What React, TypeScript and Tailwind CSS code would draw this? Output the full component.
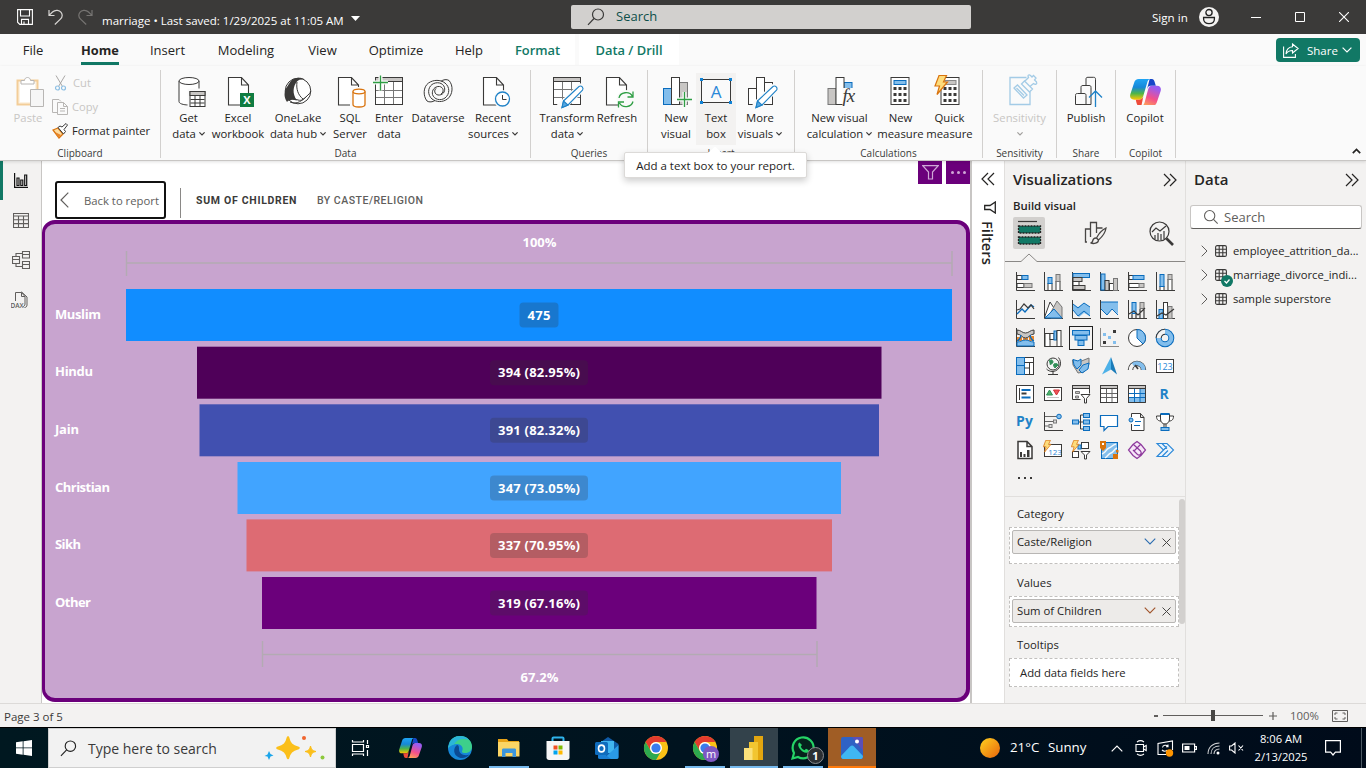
import React, { useId } from "react";

const INK = "#3b3a39";
const BLUE = "#0a6cbd";
const SKY = "#83beec";
const GRAY = "#c8c6c4";

type BoxProps = { x: number; y: number; w: number; h: number; f?: string; s?: string; sw?: number };
const Bx = ({ x, y, w, h, f = "#fff", s = INK, sw = 1 }: BoxProps) => (
  <rect x={x} y={y} width={w} height={h} fill={f} stroke={s} strokeWidth={sw} />
);
const P = ({ d, s = INK, f = "none", w = 1 }: { d: string; s?: string; f?: string; w?: number }) => (
  <path d={d} stroke={s} fill={f} strokeWidth={w} />
);

/* ---------- shared glyphs ---------- */

const Magnifier = ({ className = "", color = "#3b3a39", flip = false }: { className?: string; color?: string; flip?: boolean }) => (
  <svg className={className} viewBox="0 0 18 18" fill="none" stroke={color} strokeWidth="1.2">
    {flip ? (
      <>
        <circle cx="7.5" cy="7.5" r="5.8" />
        <path d="M11.8 11.8 16.5 16.5" />
      </>
    ) : (
      <>
        <circle cx="11" cy="6.5" r="5.5" />
        <path d="M7 10.5 1 16.8" />
      </>
    )}
  </svg>
);

const Chevron = ({ w = 10, color = INK, sw = 1.2 }: { w?: number; color?: string; sw?: number }) => (
  <svg width={w} height={w * 0.6} viewBox="0 0 10 6" fill="none" stroke={color} strokeWidth={sw}>
    <path d="M.6.6 5 5 9.4.6" />
  </svg>
);

const DoubleChevron = ({ left = false }: { left?: boolean }) => (
  <svg width="14" height="14" viewBox="0 0 14 14" fill="none" stroke="#252423" strokeWidth="1.2">
    {left ? <path d="M7 1 1 7l6 6M13 1 7 7l6 6" /> : <path d="M1 1l6 6-6 6M7 1l6 6-6 6" />}
  </svg>
);

const CopilotLogo = ({ size }: { size: number }) => {
  const id = useId().replace(/:/g, "");
  return (
    <svg width={size} height={size * 0.87} viewBox="0 0 30 26">
      <defs>
        <linearGradient id={id + "a"} x1="0" y1="0" x2="0" y2="1">
          <stop offset="0" stopColor="#1fa5f5" />
          <stop offset=".4" stopColor="#1688d8" />
          <stop offset=".7" stopColor="#4fb548" />
          <stop offset="1" stopColor="#ffc700" />
        </linearGradient>
        <linearGradient id={id + "b"} x1="0" y1="1" x2=".4" y2="0">
          <stop offset="0" stopColor="#ffb24a" />
          <stop offset=".5" stopColor="#f4508a" />
          <stop offset="1" stopColor="#9a5cf0" />
        </linearGradient>
      </defs>
      <path d="M19 0h2c2 0 2.700 2 3.300 4.200L25 6.500h-5c-2 0-3 1.500-3.700 4z" fill="#1646c8" />
      <path d="M8.500 0H20c-2 0-2.800 1.400-3.400 3.600L13 16c-1 3-2 4-4 4H4c-3.500 0-4.500-2.400-3.600-5.500L4 3.500C4.800 1.200 6 0 8.500 0z" fill={`url(#${id}a)`} />
      <path d="M11 26H9c-2 0-2.400-1.700-3-4l-.4-2H9c2.500 0 3.400-1.600 4-3.500z" fill="#ee4b3a" />
      <path d="M21.500 26H10.800c2 0 2.900-1.700 3.400-3.600L17.500 10c.8-2.600 1.800-3.600 3.800-3.600H26c3.500 0 4.500 2.400 3.600 5.500L26 22.500c-.8 2.300-2 3.500-4.500 3.500z" fill={`url(#${id}b)`} />
    </svg>
  );
};

/* ---------- title bar ---------- */

const TitleBar = () => (
  <header className="flex h-[34px] shrink-0 items-center bg-[#3b3a39] text-white">
    <div className="flex w-[571px] items-center">
      <svg className="ml-[17px]" width="16" height="16" viewBox="0 0 16 16" fill="none" stroke="#fff" strokeWidth="1.1">
        <path d="M.6.6h14.800v14.800H2.800L.6 13.200zM3.500.6v6.400h9V.6M4.500 15.400v-5h7v5M7 15v-2.500" />
      </svg>
      <svg className="ml-[15px]" width="15" height="16" viewBox="0 0 15 16" fill="none" stroke="#d8d6d4" strokeWidth="1.2">
        <path d="M1 1v5.500h5.500M1.300 6.200 4.500 3c3-2.800 7-1.800 8.600.4 1.700 2.400 1.200 4.800-.7 6.700L6.800 15.500" />
      </svg>
      <svg className="ml-[15px]" width="15" height="16" viewBox="0 0 15 16" fill="none" stroke="#767472" strokeWidth="1.200">
        <path d="M14 1v5.500H8.500M13.700 6.200 10.500 3c-3-2.800-7-1.800-8.600.4-1.700 2.400-1.200 4.800.7 6.700l5.600 5.400" />
      </svg>
      <span className="ml-[9px] mt-[7px] whitespace-nowrap text-[11.500px] leading-4">marriage • Last saved: 1/29/2025 at 11:05 AM</span>
      <svg className="ml-[7px] mt-[2px]" width="9" height="5" viewBox="0 0 9 5">
        <path d="M0 0h9L4.500 5z" fill="#fff" />
      </svg>
    </div>
    <div className="flex h-6 w-[400px] items-center rounded-[2px] bg-[#d2d0ce]">
      <Magnifier className="ml-4 size-[18px]" />
      <span className="ml-[11px] text-[13px] text-[#0d4f4a]">Search</span>
    </div>
    <div className="flex flex-1 items-center">
      <span className="ml-[181px] w-[37px] whitespace-nowrap pt-px text-[11.600px]">Sign in</span>
      <svg className="ml-[10px]" width="20" height="20" viewBox="0 0 20 20">
        <circle cx="10" cy="10" r="10" fill="#f3f2f1" />
        <circle cx="10" cy="5.600" r="3.100" fill="none" stroke="#222" strokeWidth="1.300" />
        <path d="M4.600 10.500h10.800v1.500c0 3-2.400 4.600-5.400 4.600S4.600 15 4.600 12z" fill="none" stroke="#222" strokeWidth="1.300" />
      </svg>
      <svg className="ml-[32px]" width="10" height="10" viewBox="0 0 10 10"><path d="M0 5.500h10" stroke="#fff" /></svg>
      <svg className="ml-[34px]" width="10" height="10" viewBox="0 0 10 10"><path d="M.5.5h9v9h-9z" fill="none" stroke="#fff" /></svg>
      <svg className="ml-[34px]" width="10" height="10" viewBox="0 0 10 10"><path d="m0 0 10 10M10 0 0 10" stroke="#fff" strokeWidth="1.100" /></svg>
    </div>
  </header>
);

/* ---------- ribbon tabs ---------- */

const tabs: [string, string][] = [
  ["File", "w-[66px]"],
  ["Home", "w-[68px]"],
  ["Insert", "w-[67px]"],
  ["Modeling", "w-[90px]"],
  ["View", "w-[63px]"],
  ["Optimize", "w-[84px]"],
  ["Help", "w-[62px]"],
];

const TabStrip = () => (
  <nav className="flex h-8 shrink-0 bg-[#fafafa] text-[13px] text-[#252423]">
    {tabs.map(([name, w]) => (
      <div key={name} className={`flex justify-center ${w}`}>
        <span className={`h-[31px] pt-[7px] leading-[19px] ${name === "Home" ? "border-b-[3px] border-[#117865] text-[12.800px] font-bold" : ""}`}>{name}</span>
      </div>
    ))}
    <div className="h-[31px] w-[75px] bg-white pt-[7px] text-center text-[12.900px] font-semibold leading-[19px] text-[#117865]">Format</div>
    <div className="ml-1 h-[31px] w-[100px] bg-white pt-[7px] text-center text-[12.900px] font-semibold leading-[19px] text-[#117865]">Data / Drill</div>
    <div className="ml-auto mr-[6px] mt-1 flex h-6 w-[84px] items-center rounded-[4px] bg-[#117865] text-[11.500px] text-white">
      <svg className="ml-[7px]" width="16" height="15" viewBox="0 0 16 15" fill="none" stroke="#fff" strokeWidth="1.100">
        <path d="M.6 3.500v10.900h11.800V11M9.500 1l5.600 4.500L9.500 10V7.500C6.500 7.500 4.500 8.500 3 11c.3-4.500 2.600-7 6.500-7.300z" />
      </svg>
      <span className="ml-[8px] mr-[4px] pt-px">Share</span>
      <Chevron color="#fff" w={10} />
    </div>
  </nav>
);

/* ---------- ribbon icons, drawn on the ribbon's own grid ---------- */

const PageShape = ({ x, w = 20 }: { x: number; w?: number }) => (
  <path d={`M${x} 77.500h${w - 7}l7 7.500v20h-${w}zM${x + w - 7} 77.500v7.500h7`} fill="#fff" stroke={INK} strokeWidth="1.100" />
);
const Pencil = ({ x }: { x: number }) => (
  <g stroke="#1f82c7" strokeWidth="1.100" transform={`translate(${x} 0)`}>
    <path d="M1.500 101 17 86.500c2.500-1.500 5 1.500 3.500 3.600L6 105l-6 2.500z" fill="#fff" />
    <path d="M1.500 101 6 105l-6 2.500z" fill="#58a8e0" />
  </g>
);
const Bolt = ({ t = "" }: { t?: string }) => (
  <path transform={t} d="M4.500.5h7.500L9 7h4L2.500 19.500 5 11H.5z" fill="#fddc7c" stroke="#d9730d" strokeWidth="1.200" />
);

const ribbonIcons: Record<string, React.ReactNode> = {
  get: (
    <>
      <path d="M178.500 81v20.500c0 2 4 3.500 10 3.500s10-1.500 10-3.500V81" fill="#fff" stroke={INK} />
      <ellipse cx="188.500" cy="81" rx="10" ry="3.500" fill="#fff" stroke={INK} />
      <path d="M187 88.500h19v19h-19z" fill="#fafafa" />
      <Bx x={189.500} y={91.500} w={15} h={15} />
      <Bx x={189.500} y={91.500} w={15} h={4} f={GRAY} />
      <P d="M194.500 95v11M199.500 95v11M190 99.500h14M190 103h14" />
    </>
  ),
  excel: (
    <>
      <PageShape x={228.500} />
      <rect x="240" y="93" width="14" height="14" fill="#107c41" />
      <text x="247" y="104" fontSize="11" fontWeight="700" fill="#fff" textAnchor="middle">X</text>
    </>
  ),
  onelake: (
    <>
      <circle cx="298" cy="91" r="12.800" fill="#fff" stroke={INK} />
      <path d="M292 80c4-3 9-3 13-.5-3.500-.5-6 0-8 2-4 5-5 12 0 19-5-1.500-8-1-10 1.500-3.500-5-3-11 0-15 1.200-2 2.500-4.500 5-7z" fill={INK} />
      <path d="M297 82c-1 7 1 13 6 17M290 102c7 3 12-1 19-8 1-1 1.500-1.500 1.500-3" fill="none" stroke={INK} />
      <path d="M288 100c4-2 7-1 10 0 4 1.200 6-1 9-4" fill="none" stroke={INK} />
    </>
  ),
  sql: (
    <>
      <PageShape x={338.500} />
      <rect x="350" y="87" width="17" height="22" fill="#fafafa" />
      <path d="M353 91.500v13c0 1.300 2.500 2.500 6 2.500s6-1.200 6-2.500v-13" fill="#fff" stroke="#d9730d" strokeWidth="1.300" />
      <ellipse cx="359" cy="91.500" rx="6" ry="2.300" fill="#fff" stroke="#d9730d" strokeWidth="1.300" />
    </>
  ),
  enter: (
    <>
      <Bx x={375.500} y={77.500} w={27} h={27} />
      <Bx x={375.500} y={77.500} w={27} h={4} f={GRAY} />
      <P d="M376 90.500h26M376 97.500h26M384.500 82v22M393.500 82v22" s="#777" />
      <path d="M380.500 75.500v15M373 82.500h15" stroke="#fafafa" strokeWidth="4" />
      <path d="M380.500 75.500v15M373 82.500h15" stroke="#2f9e44" strokeWidth="1.300" />
    </>
  ),
  dataverse: (
    <g fill="none" stroke={INK} strokeWidth="1">
      <path d="M427 101c-4-5-4-14 1.500-18 5-3.500 12-3.500 16.500 0 5 4 5 11 0 15-4.500 3.200-11 1.500-12.500-3.500-1-4.500 2.500-8.500 7-8 4 .6 5 5.500 1.500 7.500" />
      <path d="M449 80.500c4.500 5 4 14-1.500 18.500-5 3.500-11 3.300-15.500 0-4.500-4-4.500-11 0-14.500 4.500-3.200 11-2 12.500 3 1 4.500-2 8-6.500 7.500-3.500-.6-4.500-5-1.500-7" />
      <path d="M427 101c2 1.500 6 1 8-.5M449 80.500c-2-1.500-6-1-8 .8" />
    </g>
  ),
  recent: (
    <>
      <PageShape x={483.500} />
      <circle cx="502.500" cy="99" r="9" fill="#fafafa" />
      <circle cx="502.500" cy="99" r="7" fill="#fff" stroke="#1f82c7" strokeWidth="1.300" />
      <P d="M502.500 95v4.500h4" />
    </>
  ),
  transform: (
    <>
      <Bx x={553.500} y={77.500} w={27} h={27} />
      <Bx x={553.500} y={77.500} w={27} h={4} f={GRAY} />
      <P d="M554 89.500h26M554 97.500h26M562.500 82v22M571.500 82v22" s="#777" />
      <path d="m560 108 23-22" stroke="#fafafa" strokeWidth="9" />
      <Pencil x={562} />
    </>
  ),
  refresh: (
    <>
      <PageShape x={606.500} />
      <circle cx="626" cy="99.500" r="9.500" fill="#fafafa" />
      <path d="M619 98c1-6 10.500-7.500 13.500-1.500M633 91.500v5.500h-5.500M633 101.500c-1.500 6-10.500 7-13.500 1.500M618.500 107.500V102h5.500" fill="none" stroke="#2f9e44" strokeWidth="1.300" />
    </>
  ),
  newvisual: (
    <>
      <Bx x={663.500} y={88.500} w={8} h={16} f={SKY} s={BLUE} />
      <Bx x={679.500} y={82.500} w={8} h={22} f={GRAY} s="#777" />
      <Bx x={671.500} y={77.500} w={8} h={27} />
      <path d="M684.500 92v15M677 99.500h15" stroke="#fafafa" strokeWidth="4" />
      <path d="M684.500 92v15M677 99.500h15" stroke="#2f9e44" strokeWidth="1.300" />
    </>
  ),
  textbox: (
    <>
      <Bx x={701.500} y={79.500} w={29} h={23} f="#fafafa" />
      {[700, 729].map((x) => [78, 101].map((y) => <rect key={`${x}-${y}`} x={x} y={y} width="3" height="3" fill="#1183d6" />))}
      <text x="716" y="97.500" fontSize="17" fill="#2b88d8" textAnchor="middle">A</text>
    </>
  ),
  morevisuals: (
    <>
      <Bx x={748.500} y={88.500} w={8} h={16} />
      <Bx x={764.500} y={82.500} w={8} h={22} />
      <Bx x={756.500} y={77.500} w={8} h={27} />
      <path d="m755 107 21-20" stroke="#fafafa" strokeWidth="9" />
      <Pencil x={756} />
    </>
  ),
  calc: (
    <>
      <Bx x={827.500} y={88.500} w={8} h={16} f={GRAY} s="#777" />
      <Bx x={843.500} y={82.500} w={8} h={11} f={SKY} s={BLUE} />
      <Bx x={835.500} y={77.500} w={8} h={27} />
      <rect x="842" y="88" width="14" height="20" fill="#fafafa" />
      <text x="842" y="102" fontSize="19" fontStyle="italic" fontFamily="Liberation Serif, serif" fill={INK} letterSpacing="-1">fx</text>
    </>
  ),
  measure: (
    <>
      <Bx x={890.500} y={77.500} w={18} h={27} />
      <Bx x={893.500} y={80.500} w={12} h={4} f={SKY} s={BLUE} />
      {[87, 93, 99].map((y) => [893, 898, 903].map((x) => <rect key={`${x}-${y}`} x={x} y={y} width="3" height="3" fill={INK} />))}
    </>
  ),
  quick: (
    <>
      <Bx x={940.500} y={77.500} w={18} h={27} />
      <Bx x={944.500} y={80.500} w={11} h={4} f={GRAY} s="#888" />
      {[87, 93, 99].map((y) => [943, 948, 953].map((x) => <rect key={`${x}-${y}`} x={x} y={y} width="3" height="3" fill={INK} />))}
      <Bolt t="translate(934 75)" />
    </>
  ),
  sensitivity: (
    <g fill="none" stroke="#a3cbe6" strokeWidth="1.300">
      <path d="M1026 77.500h-16.500v27h20V92" />
      <path d="m1013.500 88 3.500-3 9.500 10-3.500 3zM1016 88l7.500 7.500" />
      <path d="m1021 84 3-3 8 8-3 3zM1024.500 81l3.500-3.500c-1.500-3 1-3 2-2l1.500 1.500 1.500-1.500 2.500 2.500-1.500 2 2 2c1 2-1 3-3 1.500L1030 86" />
    </g>
  ),
  publish: (
    <>
      <path d="M1075.500 104.500v-9c0-1.500.5-2 2-2h6.500c1.500 0 2 .5 2 2v9zM1081 93v-5.500c0-1.500.5-2 2-2h6c1.500 0 2 .5 2 2v17h-5M1086 85v-6c0-1.200.5-1.700 2-1.700h5.500c1.500 0 2 .5 2 2V92" fill="none" stroke={INK} />
      <P d="M1095.500 107V91.500M1089 97.500l6.500-6.500 6.500 6.500" s="#1f82c7" w={1.300} />
    </>
  ),
};

type Btn = { icon: string; c: number; w: string; lines: [string, string?]; drop?: boolean; active?: boolean; dim?: boolean };

const RibbonButton = ({ icon, c, w, lines, drop, active, dim }: Btn) => (
  <div className={`flex flex-col items-center pt-px ${w} ${active ? "bg-[#f3f2f1]" : ""}`}>
    {icon === "copilot" ? (
      <div className="flex h-9 items-center"><CopilotLogo size={31} /></div>
    ) : (
      <svg className="h-9 w-[38px] shrink-0 overflow-visible" viewBox={`${c - 19} 74 38 36`}>{ribbonIcons[icon]}</svg>
    )}
    <span className={`whitespace-nowrap text-[11.300px] leading-4 ${dim ? "text-[#c8c6c4]" : "text-[#252423]"}`}>{lines[0]}</span>
    <span className={`flex h-4 items-center gap-[3px] whitespace-nowrap text-[11.300px] leading-4 ${dim ? "text-[#c8c6c4]" : "text-[#252423]"}`}>
      {lines[1]}
      {drop && <Chevron w={6} sw={2} color={dim ? "#a19f9d" : INK} />}
    </span>
  </div>
);

const groups: { name: string; w: string; pad: string; items: Btn[] }[] = [
  {
    name: "Data", w: "w-[370px]", pad: "pl-[5px]",
    items: [
      { icon: "get", c: 188.500, w: "w-[45px]", lines: ["Get", "data"], drop: true },
      { icon: "excel", c: 238, w: "w-[54px]", lines: ["Excel", "workbook"] },
      { icon: "onelake", c: 298, w: "w-[66px]", lines: ["OneLake", "data hub"], drop: true },
      { icon: "sql", c: 350, w: "w-[38px]", lines: ["SQL", "Server"] },
      { icon: "enter", c: 389, w: "w-[40px]", lines: ["Enter", "data"] },
      { icon: "dataverse", c: 438, w: "w-[58px]", lines: ["Dataverse"] },
      { icon: "recent", c: 493, w: "w-[52px]", lines: ["Recent", "sources"], drop: true },
    ],
  },
  {
    name: "Queries", w: "w-[117px]", pad: "pl-[7px]",
    items: [
      { icon: "transform", c: 567, w: "w-[58px]", lines: ["Transform", "data"], drop: true },
      { icon: "refresh", c: 617, w: "w-[42px]", lines: ["Refresh"] },
    ],
  },
  {
    name: "Insert", w: "w-[147px]", pad: "pl-[8px]",
    items: [
      { icon: "newvisual", c: 676, w: "w-[40px]", lines: ["New", "visual"] },
      { icon: "textbox", c: 716, w: "w-[40px]", lines: ["Text", "box"], active: true },
      { icon: "morevisuals", c: 760, w: "w-[48px]", lines: ["More", "visuals"], drop: true },
    ],
  },
  {
    name: "Calculations", w: "w-[188px]", pad: "pl-[8px]",
    items: [
      { icon: "calc", c: 839.500, w: "w-[73px]", lines: ["New visual", "calculation"], drop: true },
      { icon: "measure", c: 900.500, w: "w-[49px]", lines: ["New", "measure"] },
      { icon: "quick", c: 949.500, w: "w-[49px]", lines: ["Quick", "measure"] },
    ],
  },
  { name: "Sensitivity", w: "w-[74px]", pad: "pl-[4px]", items: [{ icon: "sensitivity", c: 1019.500, w: "w-[65px]", lines: ["Sensitivity", ""], drop: true, dim: true }] },
  { name: "Share", w: "w-[59px]", pad: "pl-[4px]", items: [{ icon: "publish", c: 1086, w: "w-[50px]", lines: ["Publish"] }] },
  { name: "Copilot", w: "w-[60px]", pad: "pl-[4px]", items: [{ icon: "copilot", c: 1145, w: "w-[50px]", lines: ["Copilot"] }] },
];

const Ribbon = () => (
  <section className="relative z-10 flex h-[95px] shrink-0 border-b border-[#c8c6c4] bg-[#fafafa] pt-[4px] shadow-[0_1px_3px_rgba(0,0,0,0.12)]">
    <div className="flex h-[88px] w-[161px] flex-col border-r border-[#d2d0ce]">
      <div className="flex h-[75px] shrink-0">
        <div className="flex w-[52px] flex-col items-center pt-[4px] text-[11.300px] text-[#c8c6c4]">
          <svg className="ml-[9px] h-[36px] w-[30px] shrink-0" viewBox="16 74 30 36">
            <path d="M17.500 80.500h20v24h-20z" fill="#fdf3e3" stroke="#f3cd98" strokeWidth="2" />
            <path d="M20 83h15v19H20z" fill="#fff" />
            <path d="M21 84v-3.500h3.500c0-4 6-4 6 0H34V84z" fill="#fff" stroke="#b8b6b4" />
            <path d="M30.500 89.500h13v17h-13z" fill="#f6f6f6" stroke="#b8b6b4" />
          </svg>
          <span className="ml-[4px] leading-4">Paste</span>
        </div>
        <div className="flex flex-col pt-[1px] text-[11.200px]">
          <div className="flex h-6 items-center gap-[5px] pl-px text-[#c8c6c4]">
            <svg width="15" height="16" viewBox="0 0 15 16" fill="none">
              <path d="m3 .5 6.500 11M12 .5 5.500 11.500" stroke="#a9a7a5" />
              <circle cx="4.500" cy="13" r="2" stroke="#8fc0e4" strokeWidth="1.200" />
              <circle cx="10.500" cy="13" r="2" stroke="#8fc0e4" strokeWidth="1.200" />
            </svg>
            Cut
          </div>
          <div className="flex h-6 items-center gap-[4px] text-[#c8c6c4]">
            <svg width="16" height="16" viewBox="0 0 16 16" fill="none" stroke="#b8b6b4">
              <path d="M5 13.500H.5V.5H7l2 2M5.500 3.500h6l4 4v8h-10zM11.500 3.500v4h4M8 9.500h5M8 12h5" />
            </svg>
            Copy
          </div>
          <div className="flex h-6 items-center gap-[4px] text-[#252423]">
            <svg width="16" height="16" viewBox="0 0 16 16">
              <path d="m1 7 5-2 5 6-4 4z" fill="#fddca0" stroke="#d9730d" strokeWidth="1.300" />
              <path d="m3 9 6 3-2.500 3z" fill="#e8862a" />
              <path d="m6 4.500 5.500 6.500 2-2.500-1.500-2L15.500 2 14 .5 10 4 8 3z" fill="#fff" stroke={INK} />
            </svg>
            <span className="whitespace-nowrap">Format painter</span>
          </div>
        </div>
      </div>
      <span className="shrink-0 text-center text-[10px] leading-4 text-[#3b3a39]">Clipboard</span>
    </div>
    {groups.map((g) => (
      <div key={g.name} className={`flex h-[88px] flex-col border-r border-[#d2d0ce] ${g.w}`}>
        <div className={`mt-[3px] flex h-[72px] shrink-0 ${g.pad}`}>
          {g.items.map((b) => <RibbonButton key={b.icon} {...b} />)}
        </div>
        <span className="shrink-0 text-center text-[10px] leading-4 text-[#3b3a39]">{g.name}</span>
      </div>
    ))}
    <div className="flex flex-1 items-end justify-end pb-[6px] pr-[5px]">
      <svg width="9" height="6" viewBox="0 0 9 6"><path d="m.8 5.200 3.700-3.700 3.700 3.700" fill="none" stroke="#252423" strokeWidth="1.700" /></svg>
    </div>
    <div className="absolute left-[624px] top-[86px] h-[26px] w-[183px] rounded-[2px] border border-[#dcdad8] bg-white text-center text-[11.500px] leading-[25px] text-[#252423] shadow-[0_3px_7px_rgba(0,0,0,0.2)]">
      <svg className="absolute left-[82px] top-[-7px]" width="16" height="8" viewBox="0 0 16 8">
        <path d="M0 8 8 .5 16 8z" fill="#fff" />
      </svg>
      Add a text box to your report.
    </div>
  </section>
);

/* ---------- left rail ---------- */

const Rail = () => (
  <aside className="flex w-[42px] flex-col border-r border-[#c8c6c4] bg-[#f3f2f1]">
    <div className="flex h-[39px] items-center border-l-[3px] border-[#117865] pl-[11px]">
      <svg width="14" height="15" viewBox="0 0 14 15" fill="none" stroke="#111" strokeWidth="1.200">
        <path d="M.6 0v14.400H14M3 5h2v7.500H3zM6.800 7h2v5.500h-2zM10.700 2h2v10.500h-2z" />
      </svg>
    </div>
    <div className="flex h-10 items-center pl-[13px]">
      <svg width="16" height="15" viewBox="0 0 16 15" fill="none" stroke="#605e5c" strokeWidth="1.100">
        <path d="M.5.5h15v14H.5zM.5 3h15M.5 6.800h15M.5 10.600h15M5.500 3v11.500M10.500 3v11.500" />
      </svg>
    </div>
    <div className="flex h-10 items-center pl-[12px]">
      <svg width="18" height="18" viewBox="0 0 18 18" fill="none" stroke="#605e5c" strokeWidth="1.100">
        <path d="M.5 5.500h7v7h-7zM.5 8.500h7M10.500.5h7v6.500h-7zM10.500 3.500h7M10.500 10.500h7v7h-7zM10.500 13.500h7M4 5.500v-3h6.500M4 12.500v3h6.500" />
      </svg>
    </div>
    <div className="flex h-10 items-center pl-[11px]">
      <svg width="18" height="18" viewBox="0 0 18 18" fill="none" stroke="#605e5c">
        <path d="M4.500 10V1.500h6l3.500 4V13c0 1.500-1 2.500-2 2.500M10.500 1.500v4H14M10.500.8 16 6v8c0 1.500-1 2.500-2.500 2.500" />
        <text x="-.5" y="16.500" fontSize="6.500" fontWeight="600" fill="#605e5c" stroke="none">DAX</text>
      </svg>
    </div>
  </aside>
);

/* ---------- funnel ---------- */

const bars = [
  { name: "Muslim", nw: 46, label: "475", lw: 23, x: 126, w: 826, y: 289, fill: "#118dff" },
  { name: "Hindu", nw: 38, label: "394 (82.95%)", lw: 82, x: 197, w: 684.500, y: 346.700, fill: "#4f0059" },
  { name: "Jain", nw: 24, label: "391 (82.32%)", lw: 82, x: 199.500, w: 679.500, y: 404.300, fill: "#4150b0" },
  { name: "Christian", nw: 55, label: "347 (73.05%)", lw: 82, x: 237.500, w: 603.500, y: 462, fill: "#41a4ff" },
  { name: "Sikh", nw: 26, label: "337 (70.95%)", lw: 82, x: 246.500, w: 585.500, y: 519.400, fill: "#dd6b73" },
  { name: "Other", nw: 36, label: "319 (67.16%)", lw: 82, x: 262, w: 554.500, y: 577, fill: "#6b007b" },
];

const Funnel = () => (
  <div className="h-[482px] overflow-hidden rounded-[13px] border-4 border-l-[3px] border-[#6b007b] bg-[#c8a4cf]">
    <svg width="921" height="474" viewBox="45 224 921 474" className="block" fontSize="13" fontWeight="700">
      <path d="M126.500 251v25M952 251v25M126.500 263h825.500M262.500 641v26M817 641v26M262.500 654.500H817" stroke="#b3aab3" strokeWidth="1.500" fill="none" />
      <text x="522.500" y="246.500" fill="#fff" textLength="34">100%</text>
      <text x="520.500" y="682" fill="#fff" textLength="38">67.2%</text>
      {bars.map((b) => (
        <g key={b.name}>
          <rect x={b.x} y={b.y} width={b.w} height="52" fill={b.fill} />
          <rect x={539 - b.lw / 2 - 8} y={b.y + 13.500} width={b.lw + 16} height="25" rx="4" fill="#333" fillOpacity=".24" />
          <text x={539 - b.lw / 2} y={b.y + 30.700} textLength={b.lw} fill="#fff">{b.label}</text>
          <text x="55" y={b.y + 29.700} textLength={b.nw} fill="#fff">{b.name}</text>
        </g>
      ))}
    </svg>
  </div>
);

const Canvas = () => (
  <main className="flex w-[928px] flex-col bg-white">
    <div className="flex h-[59px]">
      <div className="ml-[13px] mt-5 flex h-[38px] w-[111px] items-center rounded-[3px] border-2 border-[#111] pl-[3px] text-[11.300px] text-[#605e5c]">
        <svg width="9" height="16" viewBox="0 0 9 16"><path d="M8.300.7 1 8l7.300 7.300" fill="none" stroke="#605e5c" strokeWidth="1.200" /></svg>
        <span className="ml-[15px] whitespace-nowrap pt-[2px]">Back to report</span>
      </div>
      <div className="ml-[14px] mt-[27px] h-[30px] w-px bg-[#8a8886]" />
      <div className="ml-[15px] mt-[32px] w-[121px] whitespace-nowrap font-[Roboto] text-[10.500px] font-bold leading-[15px] tracking-[0.700px] text-[#3b3a39]">SUM OF CHILDREN</div>
      <div className="mt-[32px] whitespace-nowrap font-[Roboto] text-[10.500px] font-medium leading-[15px] tracking-[0.500px] text-[#605e5c]">BY CASTE/RELIGION</div>
      <div className="ml-auto flex h-[23px] gap-1">
        <div className="flex w-6 items-center justify-center bg-[#6b007b]">
          <svg width="17" height="15" viewBox="0 0 17 15"><path d="M.8.7h15.400L10.500 7v7h-4V7z" fill="none" stroke="#cfa7d6" strokeWidth="1.200" /></svg>
        </div>
        <div className="flex w-6 items-center justify-center gap-[3px] bg-[#6b007b]">
          <i className="size-[3px] rounded-full bg-[#cfa7d6]" /><i className="size-[3px] rounded-full bg-[#cfa7d6]" /><i className="size-[3px] rounded-full bg-[#cfa7d6]" />
        </div>
      </div>
    </div>
    <Funnel />
  </main>
);

const FiltersPane = () => (
  <aside className="flex w-[35px] flex-col items-center border-l-2 border-r border-l-[#c8c6c4] border-r-[#e1dfdd] bg-white pt-[11px]">
    <DoubleChevron left />
    <svg className="ml-[4px] mt-[15px]" width="12" height="13" viewBox="0 0 12 13"><path d="M11.300 1v11L6 8.500H.7v-4H6z" fill="none" stroke="#252423" strokeWidth="1.300" /></svg>
    <span className="mt-[7px] text-[14.700px] font-semibold leading-5 text-[#252423] [writing-mode:vertical-rl]">Filters</span>
  </aside>
);

/* ---------- visual gallery, 20px tiles ---------- */

const Axis = () => <P d="M1.500 0v18.500H20" />;
const Grid3 = ({ blue = false }: { blue?: boolean }) => (
  <>
    <Bx x={1.500} y={1.500} w={17} h={17} />
    {blue && <path d="M2 13.500h17v5H2zM13 5h6v13h-6z" fill={SKY} />}
    <Bx x={1.500} y={1.500} w={17} h={3} f={GRAY} />
    <P d="M2 9.500h16.500M2 13.500h16.500M7.500 5v13.500M13 5v13.500" s={blue ? BLUE : "#666"} />
    <path d="M1.500 1.500h17v17h-17z" fill="none" stroke={INK} />
  </>
);

const gallery: React.ReactNode[] = [
  <><Axis /><Bx x={2} y={3.500} w={5} h={4} /><Bx x={7} y={3.500} w={6} h={4} f={SKY} s={BLUE} /><Bx x={2} y={11.500} w={7} h={4} /><Bx x={9} y={11.500} w={8} h={4} f={GRAY} s="#777" /></>,
  <><Axis /><Bx x={5} y={11.500} w={4} h={7} /><Bx x={5} y={5.500} w={4} h={6} f={SKY} s={BLUE} /><Bx x={13} y={9.500} w={4} h={9} /><Bx x={13} y={2.500} w={4} h={7} f={GRAY} s="#777" /></>,
  <><Axis /><Bx x={2} y={1.500} w={16.500} h={4} f={SKY} s={BLUE} /><Bx x={2} y={5.500} w={9} h={4} f={GRAY} /><Bx x={2} y={9.500} w={6} h={4} /><Bx x={2} y={13.500} w={12} h={4} f={GRAY} /></>,
  <><Axis /><Bx x={2} y={2} w={4} h={16} f={SKY} s={BLUE} /><Bx x={6} y={8.500} w={4} h={10} f={GRAY} /><Bx x={10.500} y={11.500} w={4} h={7} /><Bx x={14.500} y={6.500} w={4} h={12} f={GRAY} s="#777" /></>,
  <><Axis /><Bx x={2} y={3.500} w={5} h={4} /><Bx x={6} y={3.500} w={11} h={4} f={SKY} s={BLUE} /><Bx x={2} y={11.500} w={11} h={4} /><Bx x={12} y={11.500} w={5} h={4} f={GRAY} s="#777" /></>,
  <><Axis /><Bx x={5} y={14.500} w={4} h={4} /><Bx x={5} y={2.500} w={4} h={12} f={SKY} s={BLUE} /><Bx x={13} y={7.500} w={4} h={11} /><Bx x={13} y={2.500} w={4} h={5} f={GRAY} s="#777" /></>,
  <><Axis /><P d="m2 14 5-5 3 3 6-7 3 2" s={BLUE} w={1.400} /><P d="m2 10 3-1 4-5 4 4 3-3 3 4" w={1.200} /></>,
  <><Axis /><P d="m2 16 5-14 6 9v7H2z" f="#fff" /><P d="m8 12 6-11 5 6v11H8z" f={GRAY} s="#777" /><P d="m2 18 9-9 8 9z" f={SKY} s={BLUE} /></>,
  <><Axis /><path d="m2 4 5 3 6-4 6 4v9l-6-3-5 4-6-7z" fill={SKY} /><P d="m2 4 5 4 6-5 6 4M2 10l5 6 6-5 6 5" s={BLUE} /></>,
  <><Axis /><path d="M2 2h17v12l-6-5-5 6-6-6z" fill={SKY} /><P d="M2 2h17M2 9l6 6 5-6 6 6" s={BLUE} /></>,
  <><Axis /><Bx x={5} y={2.500} w={4} h={11} f={SKY} s={BLUE} /><Bx x={13} y={2.500} w={4} h={6} f={GRAY} s="#777" /><P d="M5 14v4M9 14v4M13 9v9M17 9v9M2 14l5-3 4 4 7-7" w={1.200} /></>,
  <><Axis /><Bx x={4} y={9.500} w={4} h={9} f={SKY} s={BLUE} /><Bx x={8.500} y={2.500} w={4} h={16} /><Bx x={13} y={6.500} w={4} h={12} f={GRAY} s="#777" /><P d="m2 16 5-3 4 2 8-6" w={1.200} /></>,
  <><Axis /><path d="M2 9h5v4H2zM8 10h5v5H8zM14 8h5v5h-5z" fill="#e8862a" /><P d="M2 2c4 0 5 3 8.500 3S15 2 19 2v4c-4 0-5 4-8.500 4S6 6 2 6z" f={GRAY} /><P d="M2 13c3-1 4-6 4-6M19 13c-3-1-4-6-4-6" s="#0a6cbd" w={1.300} /><P d="M2 18v-4c4 0 5-2 8.500-2s4.500 2 8.500 2v4z" f={SKY} s={BLUE} /></>,
  <><Axis /><Bx x={2} y={5.500} w={5} h={13} /><Bx x={7} y={5.500} w={4} h={6} /><Bx x={11} y={3} w={2.500} h={9} f={SKY} s={BLUE} /><Bx x={14} y={2.500} w={4} h={16} /></>,
  <><Bx x={1.500} y={2.500} w={17} h={4.500} f={SKY} s={BLUE} /><Bx x={4} y={7.500} w={12} h={4.500} f={SKY} s={BLUE} /><Bx x={7} y={12.500} w={6} h={5} f={SKY} s={BLUE} /></>,
  <><P d="M1.500 0v18.500H20" s="#8a8886" /><path d="M14 2h3v3h-3zM4 13h3v3H4z" fill={INK} /><path d="M4 5h3v3H4zM9 8h3v3H9zM14 13h3v3h-3z" fill={SKY} /></>,
  <><circle cx="10" cy="10" r="8.500" fill="#fff" stroke={INK} /><P d="M10 1.500V10l6 6a8.500 8.500 0 0 0-6-14.500z" f={SKY} s={BLUE} /></>,
  <><circle cx="10" cy="10" r="6.300" fill="none" stroke={BLUE} strokeWidth="6" /><circle cx="10" cy="10" r="6.300" fill="none" stroke={SKY} strokeWidth="4" /><path d="M3.700 10A6.300 6.300 0 0 1 10 3.700" fill="none" stroke={INK} strokeWidth="6" /><path d="M3.700 10A6.300 6.300 0 0 1 10 3.700" fill="none" stroke="#f4f4f4" strokeWidth="4" /></>,
  <><Bx x={1.500} y={1.500} w={17} h={17} /><Bx x={1.500} y={1.500} w={8} h={8} f={SKY} s={BLUE} /><Bx x={1.500} y={9.500} w={8} h={9} f={SKY} s={BLUE} /><P d="M9.500 6.500h9M14.500 6.500v12M9.500 12h5" /></>,
  <><circle cx="10" cy="8" r="6" fill="#f4f4f4" stroke={INK} /><path d="M6 5c2-2 4-1 4 1s-3 2-3 3M11 8c2-1 4 0 4 1l-3 3c-1-1-2-3-1-4z" fill="#2f8f57" stroke="#2f8f57" /><P d="M15.500 1.500c4 5 2 13-5.500 14-3 0-5-1-6.500-2.500M10 15.500v2.500M5 18.500h10" /></>,
  <><P d="M1.500 4 8 6l10-4v6l-5 8-6 1-5-8z" f={GRAY} s="#777" /><P d="M2 3.500 7 5l3-2v6l-4 4-3-4zM12 9l6-2-1 6-6 4-3-3z" f={SKY} s={BLUE} /></>,
  <><path d="M12 1 3 18.500l9-5z" fill="#4db1e8" /><path d="m12 1 6 17.500-6-5z" fill="#1a7bb8" /></>,
  <><path d="M3.500 14a6.500 6.500 0 0 1 13 0" fill="none" stroke={INK} strokeWidth="5.500" /><path d="M3.500 14a6.500 6.500 0 0 1 3-5.500" fill="none" stroke="#f4f4f4" strokeWidth="3.500" /><path d="M6 8.800A6.500 6.500 0 0 1 16.500 14" fill="none" stroke={SKY} strokeWidth="4" /><path d="m8 9 3 4" stroke={INK} strokeWidth="1.500" /></>,
  <><Bx x={1.500} y={3.500} w={17} h={13} /><text x="10" y="13.500" fontSize="9" fill="#2b88d8" textAnchor="middle">123</text></>,
  <><Bx x={1.500} y={1.500} w={17} h={17} /><path d="M4.500 4v12" stroke={INK} /><path d="M6.500 6h9M6.500 13.500h9" stroke={BLUE} strokeWidth="2" /><path d="M6.500 9.500h5" stroke={INK} strokeWidth="2" /></>,
  <><Bx x={1.500} y={3.500} w={17} h={13} /><P d="M3.500 11 6.500 6l3 5z" f="#4fb36b" s="#2f8f57" /><P d="m10.500 6 3 5 3-5z" f="#f0555a" s="#d13438" /><P d="M4 13.500h12" s={GRAY} /></>,
  <><path d="M9.500 15.500h-8v-13h17v7" fill="#fff" stroke={INK} /><Bx x={1.500} y={1.500} w={17} h={3} f={GRAY} /><P d="M4.500 7.500h4v2h-4zM4.500 12h3v2h-3z" s="#777" f={GRAY} /><P d="M10 10.500h9l-3.500 4v4.500h-2v-4.500z" f="#fff" /></>,
  <Grid3 />,
  <Grid3 blue />,
  <text x="9" y="14.500" fontSize="14" fontWeight="700" fill="#1f82c7" textAnchor="middle">R</text>,
  <text x="9.500" y="14" fontSize="14" fontWeight="700" fill="#1f82c7" textAnchor="middle">Py</text>,
  <><Axis /><P d="M2 4.500h13M2 9.500h9M2 14h5" s="#666" /><circle cx="16" cy="4.500" r="2.300" fill={SKY} stroke={BLUE} /><Bx x={10.500} y={8} w={3} h={3} f="#ddd" s="#777" /><Bx x={6} y={12.500} w={3} h={3} f="#ddd" s="#777" /></>,
  <><P d="M7 10h5M9.500 3v14M9.500 3h3M9.500 17h3" /><Bx x={1.500} y={8} w={6} h={4} f={SKY} s={BLUE} /><Bx x={12.500} y={1.500} w={6} h={4} f={SKY} s={BLUE} /><Bx x={12.500} y={8} w={6} h={4} f={SKY} s={BLUE} /><Bx x={12.500} y={14.500} w={6} h={4} f={SKY} s={BLUE} /></>,
  <P d="M1.500 3.500h17v11H9l-4 4v-4H1.500z" s={BLUE} f="#fff" w={1.200} />,
  <><P d="M4.500 5V1.500h9l3.500 4v13H4.500V12M13.500 1.500v4H17" f="#fff" /><circle cx="4" cy="8" r="2" fill={SKY} stroke={BLUE} /><P d="M8 9.500h6M7 13.500h6" s={BLUE} /></>,
  <><P d="M5.500 2h9v5c0 3-2 5-4.500 5S5.500 10 5.500 7zM5.500 4H1.500c0 4 2 5 4.500 5M14.500 4h4c0 4-2 5-4.500 5M9 12v4M11 12v4" f="#fff" /><path d="M5.500 2h9" stroke={BLUE} strokeWidth="2" /><Bx x={6} y={15.500} w={8} h={3} f={SKY} s={BLUE} /></>,
  <><P d="M3 1.500h9l5 5v12H3zM12 1.500v5h5" f="#fff" w={1.500} /><path d="M5 12h2v5H5zM8.500 14h2v3h-2zM12 10h2.500v7H12z" fill={INK} /></>,
  <><Bx x={1.500} y={4.500} w={17} h={12} /><text x="12" y="14.500" fontSize="8" fill="#2b88d8" textAnchor="middle">123</text><Bolt t="translate(0 0) scale(.62)" /></>,
  <><Bx x={10.500} y={2.500} w={7} h={6} /><Bx x={1.500} y={11.500} w={6} h={6} /><Bx x={7} y={5} w={3} h={4} f={SKY} s={BLUE} /><P d="M10 11.500h9l-3.500 3.500v4h-2v-4z" f="#fff" /><Bolt t="scale(.62)" /></>,
  <><Bx x={2.500} y={2.500} w={16} h={16} f={SKY} s={BLUE} /><P d="M3 14c4-1 4-5 7-6s3-3 7-4M6 18c3-2 3-4 6-5s3-4 6-5" s="#f3f8fc" w={1.500} /><path d="M1 1h6v7l-3 3-3-3z" fill="#d9730d" /><path d="M3 3h2v2H3z" fill="#fff" /><path d="M14 14h5v5h-5zM17 10h2.500v2.500H17z" fill="#d9730d" /></>,
  <P d="m10 1.500 4 3 4.500 5.500-4.500 5.500-4 3-4-3L1.500 10 6 4.500zM6.500 4.500l7 6.500c2 3-1 5-3 3.500L6 10M13.500 4.500 7 11" s="#8e3a9d" f="#f6e6f8" w={1.200} />,
  <P d="M2 3.500h10l6.500 6.500-6.500 6.500H2L8.500 10zM7 3.500l5 5M2 16.500l10-10M7 16.500l6-6" s="#2b88d8" f="#eaf4fc" w={1.100} />,
];

const Well = ({ title, field, tall, accent }: { title: string; field?: string; tall?: boolean; accent?: string }) => (
  <div className="flex flex-col">
    <span className="h-[21px] pl-2 leading-[16px]">{title}</span>
    <div className={`w-[170px] border border-dashed border-[#c2c0be] bg-white p-[2px] ${tall ? "mb-[11px] h-[37px]" : field ? "mb-[10px] h-[31px]" : "h-[29px]"}`}>
      {field ? (
        <div className="flex h-6 items-center rounded-[2px] border border-[#b8b6b4] bg-[#edebe9] pl-1">
          <span className="flex-1 whitespace-nowrap">{field}</span>
          <Chevron w={12} sw={0.900} color={accent} />
          <svg className="ml-[6px] mr-[4px]" width="9" height="9" viewBox="0 0 9 9"><path d="m.5.5 8 8M8.500.5l-8 8" stroke="#484644" /></svg>
        </div>
      ) : (
        <span className="block pl-2 leading-[23px] text-[#252423]">Add data fields here</span>
      )}
    </div>
  </div>
);

const VisualizationsPane = () => (
  <aside className="flex w-[181px] flex-col border-r border-[#e1dfdd] bg-[#f3f2f1]">
    <div className="flex h-[37px] items-center justify-between pl-2 pr-[8px]">
      <span className="text-[15px] font-semibold text-[#252423]">Visualizations</span>
      <DoubleChevron />
    </div>
    <span className="pl-2 text-[11.400px] font-semibold leading-4 text-[#252423]">Build visual</span>
    <div className="mt-[3px] flex h-8 items-center pl-2">
      <div className="flex size-8 items-center justify-center rounded-[2px] bg-[#d2d0ce]">
        <svg width="25" height="26" viewBox="0 0 25 26">
          <path d="M1 1.500h19" stroke={INK} strokeWidth="1.200" />
          <rect x="1.500" y="6" width="22" height="7" fill="#117865" stroke="#222" strokeWidth="1.300" strokeDasharray="2 1" />
          <rect x="1.500" y="17" width="22" height="7" fill="#117865" stroke="#222" strokeWidth="1.300" strokeDasharray="2 1" />
        </svg>
      </div>
      <svg className="ml-[39px]" width="24" height="24" viewBox="0 0 24 24" fill="none" stroke="#484644" strokeWidth="1.300">
        <path d="M3 21H1.500V8h5M6.500 16V1.500h6V12M12.500 7h6" />
        <path d="M22 7c-4 2-8 7-9.500 10l2 2c3.500-3 7-8 7.500-12zM12 17c-2 0-3 1-3.300 3-.2 1-1 2-2.200 2 3 1 8 .5 8-3" fill="#f3f2f1" />
      </svg>
      <svg className="ml-[41px]" width="25" height="25" viewBox="0 0 25 25" fill="none" stroke={INK} strokeWidth="1.200">
        <circle cx="10.500" cy="10.500" r="9.500" />
        <path d="M3 11l4-4 4 3 6-5M6 18v-4M9 19v-7M12 19v-6M15 18v-8" />
        <path d="m17.500 17.500 6.500 6.500" strokeWidth="2.600" />
      </svg>
    </div>
    <svg className="mt-[4px] block" width="180" height="10" viewBox="0 0 180 10"><path d="M0 8.500h16L24 1l8 7.500h148" fill="none" stroke="#8a8886" /></svg>
    <div className="ml-[6px] mt-[5px] grid w-[168px] grid-cols-6">
      {gallery.map((g, i) => (
        <div key={i} className={`flex h-7 items-center justify-center ${i === 14 ? "p-[2px]" : ""}`}>
          <svg
            width={i === 14 ? 24 : 20}
            height={i === 14 ? 24 : 20}
            viewBox={i === 14 ? "-1 -1 22 22" : "0 0 20 20"}
            className={i === 14 ? "border border-[#222]" : ""}
          >
            {g}
          </svg>
        </div>
      ))}
    </div>
    <div className="flex h-[32px] items-center gap-[4px] pb-[5px] pl-[13px]">
      <i className="size-[2px] bg-[#3b3a39]" /><i className="size-[2px] bg-[#3b3a39]" /><i className="size-[2px] bg-[#3b3a39]" />
    </div>
    <div className="flex flex-1 border-t border-[#e1dfdd]">
      <div className="flex flex-1 flex-col pl-1 pt-[9px] text-[11.300px] text-[#252423]">
        <Well title="Category" field="Caste/Religion" tall accent="#2b6cb0" />
        <Well title="Values" field="Sum of Children" accent="#a0532a" />
        <Well title="Tooltips" />
      </div>
      <div className="mt-[2px] h-[125px] w-[6px] rounded-[3px] bg-[#d2d0ce]" />
    </div>
  </aside>
);

const tables = [
  { name: "employee_attrition_da...", used: false },
  { name: "marriage_divorce_indi...", used: true },
  { name: "sample superstore", used: false },
];

const DataPane = () => (
  <aside className="flex flex-1 flex-col bg-[#f3f2f1]">
    <div className="flex h-[37px] items-center justify-between pl-2 pr-[7px]">
      <span className="text-[15px] font-semibold text-[#252423]">Data</span>
      <DoubleChevron />
    </div>
    <div className="ml-[4px] mt-[7px] flex h-6 w-[172px] items-center rounded-[3px] border border-b-[#605e5c] border-[#c8c6c4] bg-white">
      <Magnifier className="ml-[12px] size-4" flip color="#605e5c" />
      <span className="ml-[5px] pt-px text-[13px] text-[#605e5c]">Search</span>
    </div>
    <div className="mt-[10px] flex flex-col text-[11.250px] text-[#252423]">
      {tables.map((t) => (
        <div key={t.name} className="flex h-6 items-center pl-[15px]">
          <svg width="7" height="12" viewBox="0 0 7 12"><path d="m.7.7 5.300 5.300L.7 11.300" fill="none" stroke="#605e5c" /></svg>
          <div className="relative ml-[7px] size-3">
            <svg className="block" width="12" height="12" viewBox="0 0 12 12" fill="none" stroke={INK} strokeWidth="1.100">
              <rect x=".6" y=".6" width="10.800" height="10.800" rx="1.500" />
              <path d="M.6 4.200h10.800M.6 7.800h10.800M4.200.6v10.800M7.800.6v10.800" />
            </svg>
            {t.used && (
              <svg className="absolute left-[6px] top-[6px]" width="12" height="12" viewBox="0 0 12 12">
                <circle cx="6" cy="6" r="6" fill="#117865" />
                <path d="m3.500 6 2 2 3-3.500" fill="none" stroke="#fff" strokeWidth="1.300" />
              </svg>
            )}
          </div>
          <span className="ml-[6px] whitespace-nowrap">{t.name}</span>
        </div>
      ))}
    </div>
  </aside>
);

const StatusBar = () => (
  <footer className="flex h-[24px] shrink-0 items-center border-t border-[#dcdad8] bg-[#f3f2f1] pl-1 pt-px text-[11.500px] text-[#3b3a39]">
    <span className="pt-px">Page 3 of 5</span>
    <div className="ml-auto flex items-center text-[#605e5c]">
      <i className="h-[2px] w-[4px] bg-[#605e5c]" />
      <div className="ml-[5px] flex w-[100px] items-center">
        <i className="h-px w-[48px] bg-[#605e5c]" />
        <i className="h-[11px] w-[4px] bg-[#484644]" />
        <i className="h-px w-[48px] bg-[#605e5c]" />
      </div>
      <svg className="ml-[6px]" width="8" height="8" viewBox="0 0 8 8"><path d="M0 4h8M4 0v8" stroke="#605e5c" strokeWidth="1.200" /></svg>
      <span className="ml-[13px] w-[30px] text-[11.400px]">100%</span>
      <svg className="ml-[12px] mr-[18px]" width="16" height="12" viewBox="0 0 16 12" fill="none" stroke="#605e5c">
        <path d="M.5.5h15v11H.5zM3 5V3h2.500M10.500 3H13v2M13 7v2h-2.500M5.500 9H3V7" />
      </svg>
    </div>
  </footer>
);

/* ---------- taskbar ---------- */

const ChromeLogo = () => (
  <>
    <circle cx="12" cy="12" r="12" fill="#fbc116" />
    <path d="M1.600 6A12 12 0 0 1 22.400 6H12a6 6 0 0 0-5.200 9z" fill="#e33b2e" />
    <path d="M1.600 6 6.800 15a6 6 0 0 0 10.400 0L12 24A12 12 0 0 1 1.600 6z" fill="#2da94f" />
    <circle cx="12" cy="12" r="6" fill="#fff" />
    <circle cx="12" cy="12" r="4.600" fill="#3a7cec" />
  </>
);

const apps: { id: string; art: React.ReactNode; line?: string; bg?: string }[] = [
  { id: "task", art: <path d="M2.500 8.500h11v7h-11zM2.500 4v2h11V4M2.500 20v-2h11v2M17.500 4v4M17.500 14v6M16.500 9.500h2v2h-2z" fill="none" stroke="#fff" strokeWidth="1.200" /> },
  { id: "copilot", art: null },
  {
    id: "edge",
    art: (
      <>
        <circle cx="12" cy="12" r="12" fill="#1687d9" />
        <path d="M1 9C2 3 7 0 12 0c7 0 12 5 12 10.500 0 4-3 6.500-6.500 6.500-2.500 0-4-.8-3.500-1.800 2-3-.5-7.200-5-7.200C5 8 2 9.500 0 12z" fill="#3dcf8b" />
        <path d="M1 9C2 3 7 0 12 0c4 0 7 1.500 9 4C15 2 9 3 6 8.500 4 9 2 10 0 12z" fill="#2bb5d8" />
        <path d="M9 9c-4 3-4 10 2 12.500 4 1.500 8 0 10.500-3-5 2-11-.5-10.500-6 .1-2-.5-3.300-2-3.500z" fill="#0b4a93" />
      </>
    ),
  },
  {
    id: "files", line: "bg-[#76b9ed]",
    art: (
      <>
        <path d="M1 3h9l1.500 2H22v5H1z" fill="#e8a317" />
        <path d="M1 6h21.500v14.500H1z" fill="#fbd565" />
        <path d="M5 21v-7c0-1 .5-1.500 1.500-1.500h11c1 0 1.500.5 1.500 1.500v7h-3.500v-4h-7v4z" fill="#3b96dd" />
      </>
    ),
  },
  {
    id: "store",
    art: (
      <>
        <path d="M6.500 6V2.500c0-.8.4-1 1-1h9c.6 0 1 .2 1 1V6" fill="none" stroke="#2fb4ec" strokeWidth="2" />
        <path d="M.5 5h23v16.500c0 1.500-1 2.500-2.500 2.500H3c-1.500 0-2.500-1-2.500-2.500z" fill="#f6f6f6" />
        <path d="M7.500 9.500h4v4h-4z" fill="#f25022" /><path d="M12.500 9.500h4v4h-4z" fill="#7fba00" />
        <path d="M7.500 14.500h4v4h-4z" fill="#00a4ef" /><path d="M12.500 14.500h4v4h-4z" fill="#ffb900" />
      </>
    ),
  },
  {
    id: "outlook",
    art: (
      <>
        <path d="M3 8 13 1l10.500 7v13c0 1-.5 2-2 2h-16C4 23 3 22 3 21z" fill="#0f5ba7" />
        <path d="M6 5h13v12H6z" fill="#41b5f0" />
        <path d="m23.500 9-14 13 1 1h11c1.500 0 2-1 2-2z" fill="#2a9ae6" />
        <path d="m4 14 12 9H5c-1.500 0-2-1-2-2z" fill="#1a7fd4" />
        <rect x="0" y="6" width="13" height="13" rx="1.500" fill="#0f6cbd" />
        <ellipse cx="6.500" cy="12.500" rx="3" ry="3.400" fill="none" stroke="#fff" strokeWidth="1.600" />
      </>
    ),
  },
  { id: "chrome", art: <ChromeLogo /> },
  {
    id: "chrome-profile", line: "bg-[#76b9ed]",
    art: (
      <>
        <ChromeLogo />
        <circle cx="18" cy="18" r="8" fill="#7e57c2" />
        <text x="18" y="21.500" fontSize="11" fill="#fff" textAnchor="middle">m</text>
      </>
    ),
  },
  {
    id: "powerbi", bg: "bg-[#33424b]", line: "bg-[#76b9ed]",
    art: (
      <>
        <path d="M12 0h9v24h-9z" fill="#e2a50f" /><path d="M7 6h9v18H7z" fill="#f2c531" /><path d="M2 12h8.500v12H2z" fill="#fbe07a" />
      </>
    ),
  },
  {
    id: "whatsapp", line: "bg-[#76b9ed]",
    art: (
      <>
        <path d="M1.500 22.500 3 17A10.500 10.500 0 1 1 7 21z" fill="#05221c" stroke="#25d366" strokeWidth="2.200" />
        <path d="M8.500 6.500c-2 1-1.500 4 .5 6.500s5 4.500 7.500 3.500c1-.5 1.500-2 1-2.500L15 12.800l-1.500 1.500c-2-.8-3-2-3.700-3.700L11 9z" fill="#25d366" />
        <circle cx="24.500" cy="19.500" r="8" fill="#2b2f33" stroke="#8a8d90" />
        <text x="24.500" y="23.500" fontSize="11" fontWeight="700" fill="#fff" textAnchor="middle">1</text>
      </>
    ),
  },
  {
    id: "photos", bg: "bg-[#a05d25]", line: "bg-[#ff7a0a]",
    art: (
      <>
        <rect x="1" y="1" width="22" height="22" rx="2" fill="#2f62c4" />
        <path d="M12 1h9c1.500 0 2 1 2 2v12z" fill="#5a4fb8" />
        <path d="M1 20 10 10.500c1.500-1.500 2.800-1.500 4 0L23 20c0 2-1 3-2 3H3c-1 0-2-1-2-3z" fill="#3fb6f2" />
        <circle cx="17" cy="5.500" r="2" fill="#fff" />
      </>
    ),
  },
];

const Taskbar = () => (
  <footer className="flex h-[41px] shrink-0 border-t border-black bg-gradient-to-r from-[#001820] via-[#00131f] to-[#000b1a] text-white">
    <div className="flex w-12 items-center justify-center">
      <svg width="16" height="16" viewBox="0 0 16 16"><path d="M0 2.200 6.700 1.300v6.200H0zM7.500 1.200 16 0v7.500H7.500zM0 8.300h6.700v6.400L0 13.800zM7.500 8.300H16V16l-8.500-1.200z" fill="#fff" /></svg>
    </div>
    <div className="flex w-[288px] items-center border border-[#cfcfcf] bg-[#f2f2f2]">
      <Magnifier className="ml-[11px] size-[17px]" color="#222" />
      <span className="ml-[11px] flex-1 whitespace-nowrap pt-px text-[14px] text-[#3a3a3a]">Type here to search</span>
      <svg className="mr-[9px]" width="62" height="26" viewBox="0 0 62 26">
        <path d="M24 2.500c1.500 6.500 3.500 8.500 10.500 10.500-7 2-9 4-10.500 10-1.500-6-3.500-8-10.500-10 7-2 9-4 10.500-10.500z" fill="#fbbf1a" stroke="#fbbf1a" strokeLinejoin="round" strokeWidth="2.500" />
        <path d="M46.500 11c1 3.500 1.500 4.500 5.500 5.500-4 1-4.500 2-5.500 5.500-1-3.500-1.500-4.500-5.500-5.500 4-1 4.500-2 5.500-5.500z" fill="#fbbf1a" stroke="#fbbf1a" strokeLinejoin="round" />
        <path d="M5 16l1.500 3 3 1.500-3 1L5 25l-1.500-3.500L.5 21l3-1.500z" fill="#1ba5ea" />
        <circle cx="40" cy="3" r="2" fill="#f0642d" /><circle cx="58.500" cy="22.500" r="2" fill="#8cc83c" />
      </svg>
    </div>
    <div className="ml-px flex">
      {apps.map((a) => (
        <div key={a.id} className="flex w-[49px] flex-col items-center">
          <div className={`flex h-[38px] w-12 items-center justify-center pt-[2px] ${a.bg ?? ""}`}>
            {a.id === "copilot" ? <CopilotLogo size={23} /> : <svg width="24" height="24" viewBox="0 0 24 24" className="overflow-visible">{a.art}</svg>}
          </div>
          {a.line && <div className={`h-[2px] ${a.bg ? "w-12" : "w-10"} ${a.line}`} />}
        </div>
      ))}
    </div>
    <div className="ml-auto flex items-center">
      <svg width="20" height="20" viewBox="0 0 20 20">
        <defs><linearGradient id="sun" x1="0" y1="0" x2="1" y2="1"><stop offset="0" stopColor="#ffd21f" /><stop offset="1" stopColor="#e8640c" /></linearGradient></defs>
        <circle cx="10" cy="10" r="10" fill="url(#sun)" />
      </svg>
      <span className="ml-[10px] w-[38px] whitespace-nowrap text-[13.300px]">21°C</span>
      <span className="w-[39px] whitespace-nowrap text-[13.300px]">Sunny</span>
      <svg className="ml-[24px]" width="12" height="7" viewBox="0 0 12 7"><path d="m.7 6.300 5.300-5.300 5.300 5.300" fill="none" stroke="#fff" strokeWidth="1.200" /></svg>
      <svg className="ml-[12px]" width="12" height="16" viewBox="0 0 12 16" fill="none" stroke="#fff" strokeWidth="1.100"><path d="M1 4.500h7.500v7H1zM8.500 7l2.700-1.500v5L8.500 9M2 2c2-1.500 5-1.500 7 0M2 14c2 1.500 5 1.500 7 0" /></svg>
      <svg className="ml-[10px]" width="17" height="17" viewBox="0 0 17 17" fill="none" stroke="#fff" strokeWidth="1.100"><path d="M9 14.500H1v-11L15.500 1v9M11 6.500c-1.500-2-5-1.500-5.500 1M11 4.500v2.200H9M5 10c2 2 4 1.500 5 0" /><circle cx="12.500" cy="13" r="3.700" fill="#ff9500" stroke="none" /></svg>
      <svg className="ml-[8px]" width="15" height="10" viewBox="0 0 15 10"><path d="M.6 1h12v8H.6zM12.600 3.500h1.800v3h-1.800" fill="none" stroke="#fff" strokeWidth="1.200" /><path d="M2.500 3h5v4h-5z" fill="#fff" /></svg>
      <svg className="ml-[10px]" width="13" height="13" viewBox="0 0 13 13" fill="none" stroke="#fff" strokeWidth="1.100"><path d="M1 12C1 5 6 1 12.500 1M4 12c0-5 3.500-8 8.500-8M7 12c0-3 2-5 5.500-5" opacity=".8" /><circle cx="11" cy="11" r="1.500" fill="#fff" stroke="none" /></svg>
      <svg className="ml-[9px]" width="15" height="12" viewBox="0 0 15 12" fill="none" stroke="#fff" strokeWidth="1.100"><path d="M.6 4h2L6 1v10L2.600 8h-2zM9.500 3.500l4.500 5M14 3.500l-4.500 5" /></svg>
      <div className="ml-[8px] flex w-[58px] flex-col items-center whitespace-nowrap pb-px text-[11.200px] leading-[18px]">
        <span>8:06 AM</span>
        <span>2/13/2025</span>
      </div>
      <svg className="ml-[15px]" width="16" height="16" viewBox="0 0 16 16"><path d="M.6.600h14.800v11.500h-5L8 15l-2.400-2.900h-5z" fill="none" stroke="#fff" strokeWidth="1.200" /></svg>
      <div className="ml-5 mr-1 h-10 w-px bg-[#4c5963]" />
    </div>
  </footer>
);

export default function App() {
  return (
    <div className="flex h-[768px] w-[1366px] flex-col overflow-hidden font-['Open_Sans','Noto_Sans',sans-serif]">
      <TitleBar />
      <TabStrip />
      <Ribbon />
      <div className="flex h-[542px] shrink-0">
        <Rail />
        <Canvas />
        <FiltersPane />
        <VisualizationsPane />
        <DataPane />
      </div>
      <StatusBar />
      <Taskbar />
    </div>
  );
}
